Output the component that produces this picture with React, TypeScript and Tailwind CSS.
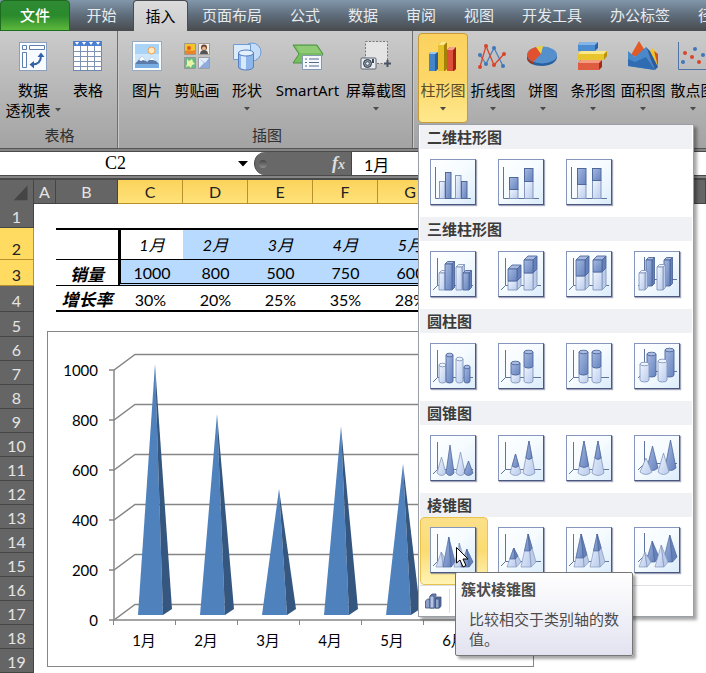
import { useState } from "react";
import type { ReactNode } from "react";

type Tone = "light" | "dark" | "split";
type ShapeKind = "bar" | "box" | "cylinder" | "cone" | "pyramid";

// x, width, top, bottom, tone, y where a stacked shape changes colour
type Item = [number, number, number, number, Tone, number?];

type Preset = {
  name: string;
  kind: ShapeKind;
  items: Item[];
  deep?: boolean;
};

type PresetGroup = {
  title: string;
  presets: Preset[];
};

const TABS = [
  "页面布局",
  "公式",
  "数据",
  "审阅",
  "视图",
  "开发工具",
  "办公标签",
  "径向",
];

const GROUPS: PresetGroup[] = [
  {
    title: "二维柱形图",
    presets: [
      {
        name: "簇状柱形图",
        kind: "bar",
        items: [
          [9, 6, 22, 39, "light"],
          [15, 6, 13, 39, "dark"],
          [25, 6, 16, 39, "light"],
          [31, 6, 22, 39, "dark"],
        ],
      },
      {
        name: "堆积柱形图",
        kind: "bar",
        items: [
          [11, 9, 18, 39, "split", 30],
          [26, 9, 9, 39, "split", 22],
        ],
      },
      {
        name: "百分比堆积柱形图",
        kind: "bar",
        items: [
          [11, 9, 9, 39, "split", 25],
          [26, 9, 9, 39, "split", 21],
        ],
      },
    ],
  },
  {
    title: "三维柱形图",
    presets: [
      {
        name: "三维簇状柱形图",
        kind: "box",
        items: [
          [9, 6, 22, 39, "light"],
          [15, 7, 13, 39, "dark"],
          [26, 6, 16, 39, "light"],
          [33, 6, 22, 39, "dark"],
        ],
      },
      {
        name: "三维堆积柱形图",
        kind: "box",
        items: [
          [10, 9, 18, 39, "split", 30],
          [26, 9, 9, 39, "split", 22],
        ],
      },
      {
        name: "三维百分比堆积柱形图",
        kind: "box",
        items: [
          [10, 9, 9, 39, "split", 25],
          [27, 9, 9, 39, "split", 21],
        ],
      },
      {
        name: "三维柱形图",
        kind: "box",
        deep: true,
        items: [
          [12, 6, 9, 35, "dark"],
          [30, 6, 9, 35, "dark"],
          [5, 6, 22, 39, "light"],
          [23, 6, 16, 39, "light"],
        ],
      },
    ],
  },
  {
    title: "圆柱图",
    presets: [
      {
        name: "簇状圆柱图",
        kind: "cylinder",
        items: [
          [9, 7, 22, 38, "light"],
          [16, 7, 12, 38, "dark"],
          [26, 7, 16, 38, "light"],
          [34, 6, 24, 38, "dark"],
        ],
      },
      {
        name: "堆积圆柱图",
        kind: "cylinder",
        items: [
          [13, 9, 20, 38, "split", 30],
          [26, 9, 9, 38, "split", 23],
        ],
      },
      {
        name: "百分比堆积圆柱图",
        kind: "cylinder",
        items: [
          [13, 9, 9, 38, "split", 30],
          [26, 9, 9, 38, "split", 23],
        ],
      },
      {
        name: "三维圆柱图",
        kind: "cylinder",
        deep: true,
        items: [
          [13, 9, 11, 32, "dark"],
          [31, 9, 7, 32, "dark"],
          [6, 9, 21, 37, "light"],
          [24, 9, 18, 37, "light"],
        ],
      },
    ],
  },
  {
    title: "圆锥图",
    presets: [
      {
        name: "簇状圆锥图",
        kind: "cone",
        items: [
          [7, 9, 22, 39, "light"],
          [16, 8, 10, 39, "dark"],
          [26, 9, 17, 39, "light"],
          [34, 9, 26, 39, "dark"],
        ],
      },
      {
        name: "堆积圆锥图",
        kind: "cone",
        items: [
          [12, 11, 19, 39, "split", 31],
          [25, 12, 6, 39, "split", 23],
        ],
      },
      {
        name: "百分比堆积圆锥图",
        kind: "cone",
        items: [
          [12, 12, 6, 39, "split", 31],
          [26, 12, 6, 39, "split", 23],
        ],
      },
      {
        name: "三维圆锥图",
        kind: "cone",
        deep: true,
        items: [
          [13, 11, 11, 34, "dark"],
          [31, 11, 5, 34, "dark"],
          [6, 12, 23, 38, "light"],
          [24, 11, 18, 38, "light"],
        ],
      },
    ],
  },
  {
    title: "棱锥图",
    presets: [
      {
        name: "簇状棱锥图",
        kind: "pyramid",
        items: [
          [6, 11, 25, 40, "light"],
          [13, 12, 10, 40, "dark"],
          [24, 11, 16, 40, "light"],
          [31, 12, 22, 40, "dark"],
        ],
      },
      {
        name: "堆积棱锥图",
        kind: "pyramid",
        items: [
          [9, 14, 21, 40, "split", 32],
          [23, 15, 7, 40, "split", 24],
        ],
      },
      {
        name: "百分比堆积棱锥图",
        kind: "pyramid",
        items: [
          [8, 15, 7, 40, "split", 31],
          [24, 15, 7, 40, "split", 24],
        ],
      },
      {
        name: "三维棱锥图",
        kind: "pyramid",
        deep: true,
        items: [
          [12, 13, 14, 35, "dark"],
          [29, 14, 8, 35, "dark"],
          [5, 12, 25, 40, "light"],
          [21, 13, 18, 40, "light"],
        ],
      },
    ],
  },
];

const FILL = {
  light: { front: "url(#front-light)", side: "#bccbe8", top: "#eef4fd", line: "#8497bd" },
  dark: { front: "url(#front-dark)", side: "#6581b9", top: "#a8badf", line: "#4f689c" },
};

const SharedGradients = () => (
  <svg className="absolute size-0" aria-hidden="true">
    <defs>
      <linearGradient id="front-light" x1="0" y1="0" x2="1" y2="1">
        <stop offset="0" stopColor="#f0f6ff" />
        <stop offset="1" stopColor="#b9caeb" />
      </linearGradient>
      <linearGradient id="front-dark" x1="0" y1="0" x2="1" y2="1">
        <stop offset="0" stopColor="#a6b9e0" />
        <stop offset="1" stopColor="#6583bf" />
      </linearGradient>
    </defs>
  </svg>
);

const Segment = ({
  kind,
  x,
  w,
  top,
  bottom,
  tone,
}: {
  kind: ShapeKind;
  x: number;
  w: number;
  top: number;
  bottom: number;
  tone: "light" | "dark";
}) => {
  const c = FILL[tone];
  const r = x + w;

  if (kind === "bar") {
    return (
      <rect x={x + 0.5} y={top + 0.5} width={w - 0.5} height={bottom - top} fill={c.front} stroke={c.line} />
    );
  }

  if (kind === "box") {
    const d = w > 7 ? 4 : 2.5;
    return (
      <g stroke={c.line} strokeWidth="0.9" strokeLinejoin="round">
        <path d={`M${x} ${top}l${d} ${-d}h${w}l${-d} ${d}z`} fill={c.top} />
        <path d={`M${r} ${top}l${d} ${-d}V${bottom - d}l${-d} ${d}z`} fill={c.side} />
        <path d={`M${x} ${top}H${r}V${bottom}H${x}z`} fill={c.front} />
      </g>
    );
  }

  const rx = w / 2;
  return (
    <g stroke={c.line} strokeWidth="0.9">
      <path d={`M${x} ${top}V${bottom}a${rx} 2 0 0 0 ${w} 0V${top}z`} fill={c.front} />
      <ellipse cx={x + rx} cy={top} rx={rx} ry="1.8" fill={c.top} />
    </g>
  );
};

const Pointed = ({ kind, item }: { kind: ShapeKind; item: Item }) => {
  const [x, w, top, bottom, tone, split = 0] = item;
  const base = tone === "dark" ? FILL.dark : FILL.light;
  const tip = FILL.dark;

  if (kind === "cone") {
    const mid = x + w / 2;
    const half = ((split - top) / (bottom - top)) * (w / 2);
    return (
      <g strokeWidth="0.8" strokeLinejoin="round">
        <path
          d={`M${mid} ${top}L${x} ${bottom - 1}Q${mid} ${bottom + 4} ${x + w} ${bottom - 1}z`}
          fill={base.front}
          stroke={base.line}
        />
        {tone === "split" && (
          <path
            d={`M${mid} ${top}L${mid - half} ${split}Q${mid} ${split + 3} ${mid + half} ${split}z`}
            fill={tip.front}
            stroke={tip.line}
          />
        )}
      </g>
    );
  }

  const apex = x + w * 0.48;
  const edge = x + w * 0.68;
  const ratio = (split - top) / (bottom - top);
  const at = (end: number) => apex + (end - apex) * ratio;
  return (
    <g strokeWidth="0.7" strokeLinejoin="round">
      <path d={`M${apex} ${top}L${x} ${bottom}H${edge}z`} fill={base.front} stroke={base.line} />
      <path d={`M${apex} ${top}L${edge} ${bottom}L${x + w} ${bottom - 5}z`} fill={base.side} stroke={base.line} />
      {tone === "split" && (
        <>
          <path d={`M${apex} ${top}L${at(x)} ${split}H${at(edge)}z`} fill={tip.front} stroke={tip.line} />
          <path
            d={`M${apex} ${top}L${at(edge)} ${split}L${at(x + w)} ${split - 3}z`}
            fill={tip.side}
            stroke={tip.line}
          />
        </>
      )}
    </g>
  );
};

const PresetIcon = ({ preset }: { preset: Preset }) => {
  const { kind, items, deep } = preset;
  let axis = "M7.5 7V34.5M3 39L7.5 34.5H43";
  if (kind === "bar") axis = "M5.5 8V39.5H41";
  if (deep) axis = "M10.5 6V28M4 35L10.5 28.5H43";

  return (
    <svg viewBox="0 0 46 46" className="size-[46px]" aria-hidden="true">
      <path d={axis} fill="none" stroke="#5f759f" />
      {items.map((item, i) => {
        const [x, w, top, bottom, tone, split = 0] = item;
        if (kind === "cone" || kind === "pyramid") {
          return <Pointed key={i} kind={kind} item={item} />;
        }
        if (tone === "split") {
          return (
            <g key={i}>
              <Segment kind={kind} x={x} w={w} top={split} bottom={bottom} tone="light" />
              <Segment kind={kind} x={x} w={w} top={top} bottom={split} tone="dark" />
            </g>
          );
        }
        return <Segment key={i} kind={kind} x={x} w={w} top={top} bottom={bottom} tone={tone} />;
      })}
    </svg>
  );
};

const Arrow = () => (
  <svg viewBox="0 0 6 4" className="h-1 w-1.5" aria-hidden="true">
    <path d="M0 0h6L3 3.5z" fill="#4a4a4a" />
  </svg>
);

const PivotIcon = () => (
  <>
    <rect x="2.5" y="1.5" width="27" height="28" fill="#f8fbff" stroke="#8ba0bd" />
    <path d="M5.5 4.5h4v4h-4zM12.5 4.5h15v4h-15zM5.5 11.5h4v15h-4z" fill="#fff" stroke="#5f7fae" />
    <path d="M15 23.5C21 23.5 24 20 24 14.5" fill="none" stroke="#3562a6" strokeWidth="2" />
    <path d="M20.5 16L24 11.5L27.5 16zM17 20L12.5 23.5L17 27.5z" fill="#3562a6" />
  </>
);

const GridIcon = () => (
  <>
    <rect x="1.5" y="0.5" width="28" height="29" fill="#fff" stroke="#6d87b3" />
    <path d="M1 0h29v5H1z" fill="#4c7fd0" />
    <path d="M3 1h4L5 4zM10 1h4l-2 3zM17 1h4l-2 3zM24 1h4l-2 3z" fill="#fff" />
    <path
      d="M8.5 5v24M15.5 5v24M22.5 5v24M1 10.5h29M1 15.5h29M1 20.5h29M1 25.5h29"
      stroke="#7f92b3"
    />
  </>
);

const PictureIcon = () => (
  <>
    <rect x="1.5" y="0.5" width="29" height="29" fill="#fafdff" stroke="#98aabf" />
    <rect x="4" y="3" width="24" height="24" fill="#a9d3f7" />
    <path d="M4 13h24v14H4z" fill="#cde6fb" />
    <circle cx="20.5" cy="9.5" r="3.5" fill="#fde9c4" stroke="#f0a152" />
    <path d="M4 23l7-8 5 6 5-5 7 7z" fill="#5b7ca8" />
    <path d="M8 19l3-4 4 5-3-1-2 1zM18 19l3-3 4 4-3-1z" fill="#fff" />
    <path d="M4 23h24v4H4z" fill="#79aee2" />
  </>
);

const ClipArtIcon = () => (
  <>
    <g stroke="#8f8f8f" strokeWidth="0.8">
      <path d="M3.5 2.5h11v11h-11z" fill="#f4c42e" />
      <path d="M17.5 2.5h11v11h-11z" fill="#f3f0ea" />
      <path d="M3.5 16.5h11v11h-11z" fill="#69b98a" />
      <path d="M17.5 16.5h11v11h-11z" fill="#e3edfb" />
    </g>
    <path d="M4 10c3-2 7 1 10-1v4H4z" fill="#e9842a" />
    <circle cx="8" cy="7" r="2" fill="#e0571c" />
    <circle cx="23" cy="6.5" r="3" fill="#704028" />
    <circle cx="23" cy="7.5" r="2" fill="#e9b78c" />
    <path d="M19 13c0-3 2-4 4-4s4 1 4 4z" fill="#555" />
    <path d="M6 18l2 2 3-2 1 3 2 2-3 1-1 3-2-2-3 1 1-3z" fill="#e9f3a4" />
    <path d="M18 17l6 5 4-5v10H18l5-5z" fill="#8fabdc" />
  </>
);

const ShapesIcon = () => (
  <>
    <circle cx="21" cy="11" r="9" fill="#c5dcf7" stroke="#6f9bd3" />
    <path d="M2.5 3.5h17v15h-17z" fill="#dcebfc" stroke="#6f9bd3" />
    <path d="M7.5 12v14a7.5 3 0 0 0 15 0V12z" fill="#8db6ea" stroke="#5780bd" />
    <path d="M10 14v13q3 2 5 1V14z" fill="#d9e9fc" />
    <ellipse cx="15" cy="12" rx="7.5" ry="3" fill="#e4f0fe" stroke="#5780bd" />
  </>
);

const SmartArtIcon = () => (
  <>
    <path d="M1 4h24l6 9-6 9H1l6-9z" fill="#79bd61" stroke="#4a9340" />
    <path d="M4 5h20l5 7H8z" fill="#8fcb76" />
    <path d="M10.5 14.5h19v14h-19z" fill="#f5f8fc" stroke="#8598b2" />
    <path d="M13 18h2M17 18h10M13 21.5h2M17 21.5h10M13 25h2M17 25h10" stroke="#566b8a" />
  </>
);

const ScreenshotIcon = () => (
  <>
    <path d="M5.5 0.5h22v22h-22z" fill="#e4e4e4" stroke="#777" strokeDasharray="2 1.5" />
    <path d="M27.5 19v7M24 22.5h7" stroke="#4a5361" strokeWidth="2" />
    <rect x="1" y="17" width="15" height="11" rx="1" fill="#e9edf2" stroke="#59636f" />
    <path d="M12 18h2v4h-2z" fill="#3d4753" />
    <circle cx="7.5" cy="22.5" r="4" fill="#8a95a3" stroke="#2d3640" />
    <circle cx="7.5" cy="22.5" r="1.8" fill="#e6eff9" stroke="#2d3640" strokeWidth="0.7" />
  </>
);

const ColumnIcon = () => (
  <>
    <path d="M2 13l2-2h7v17l-2 2H2z" fill="#2a5f9f" />
    <path d="M2 13h6v17H2z" fill="#4484c8" />
    <path d="M2 13l2-2h7l-3 2z" fill="#9cc8f0" />
    <path d="M11 4l3-3h6v27l-2 2h-7z" fill="#a68108" />
    <path d="M11 4h6v26h-6z" fill="#e6c02a" />
    <path d="M11 4l3-3h6l-3 3z" fill="#fae88a" />
    <path d="M20 9l3-3h6v22l-2 2h-7z" fill="#9f2415" />
    <path d="M20 9h6v21h-6z" fill="#dd5138" />
    <path d="M20 9l3-3h6l-3 3z" fill="#f5a18c" />
  </>
);

const LineIcon = () => (
  <>
    <path d="M3 14l6 9 8-16 9 18" fill="none" stroke="#4d82c0" strokeWidth="1.3" />
    <path d="M3 26L9 5l8 19 10-11" fill="none" stroke="#d9452b" strokeWidth="1.3" />
    <g fill="#3f77b9">
      <circle cx="3" cy="14" r="2" />
      <circle cx="9" cy="23" r="2" />
      <circle cx="17" cy="7" r="2" />
      <circle cx="26" cy="25" r="2" />
    </g>
    <g fill="#d9452b">
      <circle cx="3" cy="26" r="2" />
      <circle cx="9" cy="5" r="2" />
      <circle cx="17" cy="24" r="2" />
      <circle cx="27" cy="13" r="2" />
    </g>
  </>
);

const PieIcon = () => (
  <>
    <path d="M0 14v3c0 5 7 8 15 8s15-4 15-9v-2z" fill="#28609f" />
    <ellipse cx="15" cy="14" rx="15" ry="8.5" fill="#5590cd" />
    <path d="M14 13L6 21C-2 17-2 9 9 6z" fill="#e1502f" />
    <path d="M0 14v3c0 2 2 5 6 6v-2c-4-1-6-4-6-7z" fill="#a93218" />
    <path d="M14 13L9 6q3-1 7-1z" fill="#f3d23a" />
  </>
);

const BarIcon = () => (
  <>
    <path d="M1 4l2-3h18v6l-3 3H1z" fill="#2a62a5" />
    <path d="M1 4h17v6H1z" fill="#4c8cd0" />
    <path d="M1 4l2-3h18l-3 3z" fill="#84b5e6" />
    <path d="M1 13l3-3h26v5l-3 4H1z" fill="#b99208" />
    <path d="M1 13h26v6H1z" fill="#e8c52d" />
    <path d="M1 13l3-3h26l-3 3z" fill="#fae88a" />
    <path d="M1 22l3-3h21v7l-3 3H1z" fill="#a52a15" />
    <path d="M1 22h21v7H1z" fill="#df5c40" />
    <path d="M1 22l3-3h21l-3 3z" fill="#f49a80" />
  </>
);

const AreaIcon = () => (
  <>
    <path d="M4 14L12 0l8 13 6-3v13z" fill="#e25a26" />
    <path d="M21 12l5-5 4 6v12z" fill="#f1c52d" />
    <path d="M27 10l4 3v13z" fill="#d2521d" />
    <path d="M1 10l7 6L19 6l9 23L1 25z" fill="#4a88cc" />
    <path d="M1 18l7 3 11-5 9 13L1 25z" fill="#2f6cb2" />
    <path d="M19 6l4 4 8 16-3 3z" fill="#285d9f" />
  </>
);

const ScatterIcon = () => (
  <>
    <path d="M1.5 1v27.5H31" fill="none" stroke="#4f74a5" />
    <g fill="#3f77b9">
      <circle cx="6" cy="21" r="2" />
      <circle cx="18" cy="8" r="2" />
      <circle cx="26" cy="14" r="2" />
    </g>
    <g fill="#d9452b">
      <circle cx="8" cy="12" r="2" />
      <circle cx="15" cy="16" r="2" />
      <circle cx="22" cy="21" r="2" />
    </g>
  </>
);

type RibbonButtonProps = {
  label: string;
  width: string;
  icon: ReactNode;
  arrow?: boolean;
  open?: boolean;
  onClick?: () => void;
};

const RibbonButton = ({ label, width, icon, arrow, open, onClick }: RibbonButtonProps) => (
  <button
    type="button"
    onClick={onClick}
    className={`flex h-[90px] shrink-0 flex-col items-center rounded-sm border pt-[7px] whitespace-nowrap ${width} ${
      open
        ? "border-[#c79a35] bg-linear-to-b from-[#fbd25f] via-[#fcd768] to-[#fee88c] text-[#5c4d27]"
        : "border-transparent text-black"
    }`}
  >
    <svg viewBox="0 0 32 32" className="size-8" aria-hidden="true">
      {icon}
    </svg>
    <span className="mt-[7px] leading-5">{label}</span>
    {arrow && (
      <span className="mt-[7px]">
        <Arrow />
      </span>
    )}
  </button>
);

const RibbonGroup = ({
  title,
  className,
  children,
}: {
  title?: string;
  className: string;
  children: ReactNode;
}) => (
  <section className={`flex flex-col pt-0.5 ${className}`}>
    <div className="flex">{children}</div>
    {title && <h2 className="mt-0.5 text-center leading-5 text-[#2f2f2f]">{title}</h2>}
  </section>
);

const Tooltip = () => (
  <div
    role="tooltip"
    className="absolute top-[55px] left-[35px] z-20 w-[178px] rounded-xs border border-[#767676] bg-linear-to-b from-white to-[#e2e3f0] px-[5px] py-1.5 text-left text-[#4c4c4c] shadow-[3px_3px_3px_rgba(0,0,0,0.35)]"
  >
    <p className="leading-5 font-bold">簇状棱锥图</p>
    <p className="mt-2.5 pl-2 leading-5">比较相交于类别轴的数值。</p>
    <svg viewBox="0 0 13 21" className="absolute -top-[26px] left-0 h-[21px] w-[13px]" aria-hidden="true">
      <path d="M0.5 0.5V16l3.5-3 3 7 3-1.5-3-6.5h5z" fill="#fff" stroke="#000" />
    </svg>
  </div>
);

const ChartMenu = () => (
  <div className="absolute top-full left-0 z-10 mt-px w-[276px] border border-[#9a9fa8] bg-white p-px pt-0 text-[#3b3b3b] shadow-[3px_3px_3px_rgba(0,0,0,0.35)]">
    {GROUPS.map((group) => (
      <section key={group.title}>
        <h3 className="h-6 bg-[#eff1f5] pl-[7px] leading-6 font-bold">{group.title}</h3>
        <div className="grid h-[68px] grid-cols-4">
          {group.presets.map((preset) => {
            const hovered = preset.name === "簇状棱锥图";
            return (
              <div key={preset.name} className="relative">
                <button
                  type="button"
                  aria-label={preset.name}
                  className={`flex h-[68px] w-full items-start rounded-sm border pt-[9px] pl-[9px] ${
                    hovered
                      ? "border-[#e9c34f] bg-linear-to-b from-[#fbe08a] via-[#fbdc72] to-[#fff3b4]"
                      : "border-transparent"
                  }`}
                >
                  <span className="border border-[#8796bd] border-r-[#4a5780] border-b-[#4a5780] bg-linear-to-br from-white via-[#f5fbff] to-[#dcecfb] shadow-[1px_1px_1px_rgba(70,80,120,0.5)]">
                    <span className="-m-px block">
                      <PresetIcon preset={preset} />
                    </span>
                  </span>
                </button>
                {hovered && <Tooltip />}
              </div>
            );
          })}
        </div>
      </section>
    ))}
    <button
      type="button"
      aria-label="所有图表类型"
      className="flex h-[30px] w-full items-center border-t border-[#dcdfe4] pl-1"
    >
      <svg viewBox="0 0 18 18" className="size-[18px]" aria-hidden="true">
        <g stroke="#3e5078" strokeWidth="0.8">
          <path d="M1.5 9l2-2h3v9h-5z" fill="#8d9fc8" />
          <path d="M6 4l2-2h4v14H6z" fill="#6f85b8" />
          <path d="M6 4h4v12H6z" fill="#b4c3e4" />
          <path d="M11.5 7l1.5-2h4v9l-1.500 2h-4z" fill="#566c9f" />
          <path d="M11.5 7h3.500v9h-3.500z" fill="#93a6d0" />
        </g>
      </svg>
      <span className="ml-[7px] h-6 border-l border-[#dcdfe4]" />
    </button>
  </div>
);

const Ribbon = () => {
  const [open, setOpen] = useState(true);

  return (
    <div className="flex h-[118px] border-b border-[#555] bg-linear-to-b from-[#cbcbcb] to-[#a3a3a3]">
      <RibbonGroup title="表格" className="w-[118px] shrink-0 border-r border-[#6f6f6f] pl-0.5">
        <button type="button" className="flex h-[90px] w-[62px] flex-col items-center pt-2">
          <svg viewBox="0 0 32 32" className="size-8" aria-hidden="true">
            <PivotIcon />
          </svg>
          <span className="mt-[7px] leading-5">数据</span>
          <span className="flex items-center gap-1 leading-5 whitespace-nowrap">
            透视表
            <Arrow />
          </span>
        </button>
        <RibbonButton label="表格" width="w-[48px]" icon={<GridIcon />} />
      </RibbonGroup>

      <RibbonGroup
        title="插图"
        className="w-[295px] shrink-0 border-r border-l border-r-[#6f6f6f] border-l-[#c9c9c9] pl-[3px]"
      >
        <RibbonButton label="图片" width="w-[50px]" icon={<PictureIcon />} />
        <RibbonButton label="剪贴画" width="w-[50px]" icon={<ClipArtIcon />} />
        <RibbonButton label="形状" width="w-[50px]" icon={<ShapesIcon />} arrow />
        <RibbonButton label="SmartArt" width="w-[71px]" icon={<SmartArtIcon />} />
        <RibbonButton label="屏幕截图" width="w-[66px]" icon={<ScreenshotIcon />} arrow />
      </RibbonGroup>

      <RibbonGroup className="min-w-0 flex-1 border-l border-[#c9c9c9] pl-1">
        <div className="relative">
          <RibbonButton
            label="柱形图"
            width="w-[50px]"
            icon={<ColumnIcon />}
            arrow
            open={open}
            onClick={() => setOpen(!open)}
          />
          {open && <ChartMenu />}
        </div>
        <RibbonButton label="折线图" width="w-[50px]" icon={<LineIcon />} arrow />
        <RibbonButton label="饼图" width="w-[50px]" icon={<PieIcon />} arrow />
        <RibbonButton label="条形图" width="w-[50px]" icon={<BarIcon />} arrow />
        <RibbonButton label="面积图" width="w-[50px]" icon={<AreaIcon />} arrow />
        <RibbonButton label="散点图" width="w-[50px]" icon={<ScatterIcon />} arrow />
      </RibbonGroup>
    </div>
  );
};

const FormulaBar = () => (
  <div className="border-b-2 border-[#4a4a4a] bg-[#858585] py-0.5">
    <div className="flex h-[25px] border-y border-[#4a4a4a] bg-white">
      <input
        aria-label="名称框"
        defaultValue="C2"
        className="w-[231px] bg-white text-center font-['Liberation_Serif',serif] text-lg leading-none outline-none"
      />
      <button type="button" aria-label="展开名称框" className="flex w-[23px] items-center justify-center">
        <svg viewBox="0 0 10 6" className="h-1.5 w-2.5" aria-hidden="true">
          <path d="M0 0h10L5 5.5z" fill="#000" />
        </svg>
      </button>
      <div className="flex w-[97px] items-center justify-between rounded-l-full border-l border-[#444] bg-[#686868] pr-1.5 pl-1">
        <span className="size-2 rounded-full bg-linear-to-b from-[#484848] to-[#8c8c8c]" />
        <button
          type="button"
          aria-label="插入函数"
          className="font-['Liberation_Serif',serif] text-lg leading-5 font-bold text-[#dedede] italic"
        >
          f<span className="text-sm">x</span>
        </button>
      </div>
      <input
        aria-label="编辑栏"
        defaultValue="1月"
        className="min-w-0 flex-1 border-l border-[#444] px-3 font-['Lato','Noto_Sans_CJK_SC',sans-serif] text-base leading-none outline-none"
      />
    </div>
  </div>
);

const MONTHS = ["1月", "2月", "3月", "4月", "5月", "6月"];
const SALES = [1000, 800, 500, 750, 600, 700];
const GROWTH = ["30%", "20%", "25%", "35%", "28%", "30%"];

const PyramidChart = () => (
  <svg
    viewBox="0 0 487 336"
    className="absolute top-[151px] left-[47px] h-[336px] w-[487px] font-['Lato','Noto_Sans_CJK_SC',sans-serif] text-[15px]"
    role="img"
    aria-label="销量"
  >
    <rect x="0.5" y="0.5" width="486" height="335" fill="#fff" stroke="#868686" />
    {[1000, 800, 600, 400, 200, 0].map((value, i) => {
      const y = 39 + i * 50;
      return (
        <g key={value}>
          <path
            d={`M62 ${y}h5L88 ${y - 15.5}H460`}
            fill="none"
            stroke="#868686"
            strokeWidth="1.5"
          />
          <text x="51" y={y + 6} textAnchor="end">
            {value}
          </text>
        </g>
      );
    })}
    <path d="M67 39V289H440" fill="none" stroke="#868686" strokeWidth="1.5" />
    {MONTHS.map((month, i) => {
      const x = 91 + i * 62;
      const top = 283 - SALES[i] / 4;
      return (
        <g key={month}>
          <path d={`M${x + 17} ${top}L${x} 284h25z`} fill="#4f81bd" />
          <path d={`M${x + 17} ${top}L${x + 25} 284l9-6z`} fill="#34567f" />
          <path d={`M${66.5 + i * 62} 289v5`} stroke="#868686" />
          <text x={97 + i * 62} y="315" textAnchor="middle">
            {month}
          </text>
        </g>
      );
    })}
  </svg>
);

const COLUMNS = ["A", "B", "C", "D", "E", "F", "G", "H", "I", "J", "K"];
const COLUMN_WIDTHS = ["w-[22px]", "w-[62px]"];
const ROW_HEIGHTS = ["h-6", "h-8", "h-[26px]", "h-[26px]", "h-[25px]"];

const cellText = (row: number, col: number): string | number => {
  if (row === 3 && col === 1) return "销量";
  if (row === 4 && col === 1) return "增长率";
  if (col < 2 || col > 7) return "";
  if (row === 2) return MONTHS[col - 2];
  if (row === 3) return SALES[col - 2];
  if (row === 4) return GROWTH[col - 2];
  return "";
};

const cellStyle = (row: number, col: number): string => {
  if (row < 2 || row > 4 || col < 1 || col > 7) return "";
  if (col === 1) {
    if (row === 2) return "border-t-2 border-b border-black";
    if (row === 3) return "border-b border-black align-bottom text-[17px] italic font-bold";
    return "border-b-2 border-black align-bottom text-[17px] italic font-bold";
  }
  if (row === 4) return "border-b-2 border-black align-bottom";
  const left = col === 2 ? "border-l-[3px]" : "";
  if (row === 2) {
    return `border-t-2 border-b border-black italic ${left} ${col === 2 ? "bg-white" : "bg-[#b8dafe]"}`;
  }
  return `border-b-3 border-black bg-[#b8dafe] align-bottom [border-bottom-style:double] ${left}`;
};

const Sheet = () => (
  <div className="relative overflow-hidden bg-white font-['Lato','Noto_Sans_CJK_SC',sans-serif] text-base leading-5">
    <table className="w-[703px] min-w-full table-fixed border-separate border-spacing-0 text-center">
      <thead>
        <tr className="h-6">
          <th className="w-[34px] border-r border-[#454545] bg-[#656565] p-0">
            <svg viewBox="0 0 34 24" className="block h-[22px] w-full" aria-hidden="true">
              <path d="M29 5V21H14z" fill="#454545" />
            </svg>
          </th>
          {COLUMNS.map((name, i) => (
            <th
              key={name}
              className={`border-r border-b p-0 font-normal ${
                name === "K" ? "" : (COLUMN_WIDTHS[i] ?? "w-[65px]")
              } ${
                i > 1 && i < 8
                  ? "border-[#b8912d] bg-linear-to-b from-[#fbd35b] to-[#ffe27a] text-[#222]"
                  : "border-[#454545] bg-[#656565] text-[#e4e4e4]"
              }`}
            >
              {name === "K" ? "" : name}
            </th>
          ))}
        </tr>
      </thead>
      <tbody>
        {Array.from({ length: 19 }, (_, i) => i + 1).map((row) => (
          <tr key={row} className={ROW_HEIGHTS[row - 1] ?? "h-6"}>
            <th
              className={`border-r border-b p-0 align-bottom font-normal ${
                row === 2 || row === 3
                  ? "border-[#b8912d] bg-[#ffdb62] text-[#222]"
                  : "border-[#454545] bg-[#656565] text-[#e4e4e4]"
              }`}
            >
              {row}
            </th>
            {COLUMNS.map((name, col) => (
              <td key={name} className={`p-0 whitespace-nowrap ${cellStyle(row, col)}`}>
                {cellText(row, col)}
              </td>
            ))}
          </tr>
        ))}
      </tbody>
    </table>
    <PyramidChart />
  </div>
);

const App = () => (
  <main className="w-full overflow-hidden bg-white font-['Noto_Sans','Noto_Sans_CJK_SC',sans-serif] text-[15px] text-black">
    <SharedGradients />
    <nav className="flex h-[31px] bg-linear-to-b from-[#8197ab] via-[#5e6c7a] to-[#484b4e] whitespace-nowrap text-[#e8ebee]">
      <button
        type="button"
        className="w-[70px] shrink-0 rounded-t-sm border border-[#1c6b1e] bg-linear-to-b from-[#2f8a34] via-[#2a8a2c] to-[#5cb83c] font-medium text-white"
      >
        文件
      </button>
      <button type="button" className="w-[63px] shrink-0">
        开始
      </button>
      <button
        type="button"
        className="w-[55px] shrink-0 rounded-t-sm border border-b-0 border-[#4a4d50] bg-linear-to-b from-[#dcdcdc] to-[#cbcbcb] text-black"
      >
        插入
      </button>
      {TABS.map((tab) => (
        <button key={tab} type="button" className="shrink-0 px-[14px]">
          {tab}
        </button>
      ))}
    </nav>
    <Ribbon />
    <FormulaBar />
    <Sheet />
  </main>
);

export default App;
